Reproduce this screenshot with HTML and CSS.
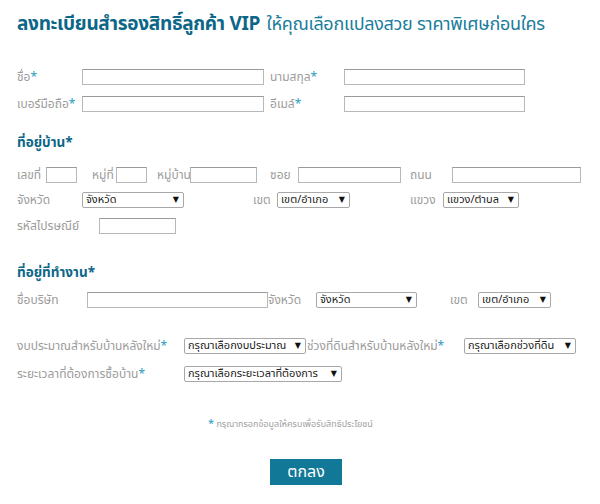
FILE: index.html
```html
<!DOCTYPE html>
<html lang="th">
<head>
<meta charset="utf-8">
<title>ลงทะเบียน VIP</title>
<link rel="stylesheet" href="styles.css">
</head>
<body>
<div class="page">
  <h1 class="title"><b>ลงทะเบียนสำรองสิทธิ์ลูกค้า VIP</b> ให้คุณเลือกแปลงสวย ราคาพิเศษก่อนใคร</h1>

  <div class="row r1">
    <span class="lbl w65">ชื่อ<i>*</i></span>
    <input class="inp w182" type="text">
    <span class="lbl w74 ml6">นามสกุล<i>*</i></span>
    <input class="inp w181" type="text">
  </div>
  <div class="row r2">
    <span class="lbl w65">เบอร์มือถือ<i>*</i></span>
    <input class="inp w182" type="text">
    <span class="lbl w74 ml6">อีเมล์<i>*</i></span>
    <input class="inp w181" type="text">
  </div>

  <h2 class="sec s1">ที่อยู่บ้าน*</h2>
  <div class="row r3">
    <span class="lbl w29">เลขที่</span>
    <input class="inp w31" type="text">
    <span class="lbl w24 ml15">หมู่ที่</span>
    <input class="inp w31" type="text">
    <span class="lbl w33 ml10">หมู่บ้าน</span>
    <input class="inp w67" type="text">
    <span class="lbl w28 ml13">ซอย</span>
    <input class="inp w103" type="text">
    <span class="lbl w42 ml9">ถนน</span>
    <input class="inp w129" type="text">
  </div>
  <div class="row r4">
    <span class="lbl w65">จังหวัด</span>
    <span class="sel w102"><select><option>จังหวัด</option></select></span>
    <span class="lbl w24 ml69">เขต</span>
    <span class="sel w73"><select><option>เขต/อำเภอ</option></select></span>
    <span class="lbl w33 ml60">แขวง</span>
    <span class="sel w76"><select><option>แขวง/ตำบล</option></select></span>
  </div>
  <div class="row r5">
    <span class="lbl w82">รหัสไปรษณีย์</span>
    <input class="inp w77" type="text">
  </div>

  <h2 class="sec s2">ที่อยู่ที่ทำงาน*</h2>
  <div class="row r6">
    <span class="lbl w70">ชื่อบริษัท</span>
    <input class="inp w181" type="text">
    <span class="lbl w48">จังหวัด</span>
    <span class="sel w101"><select><option>จังหวัด</option></select></span>
    <span class="lbl w28 ml33">เขต</span>
    <span class="sel w73"><select><option>เขต/อำเภอ</option></select></span>
  </div>

  <div class="row r7">
    <span class="lbl w167">งบประมาณสำหรับบ้านหลังใหม่<i>*</i></span>
    <span class="sel w122"><select><option>กรุณาเลือกงบประมาณ</option></select></span>
    <span class="lbl w157 ml1">ช่วงที่ดินสำหรับบ้านหลังใหม่<i>*</i></span>
    <span class="sel w112"><select><option>กรุณาเลือกช่วงที่ดิน</option></select></span>
  </div>
  <div class="row r8">
    <span class="lbl w167">ระยะเวลาที่ต้องการซื้อบ้าน<i>*</i></span>
    <span class="sel w158"><select><option>กรุณาเลือกระยะเวลาที่ต้องการ</option></select></span>
  </div>

  <p class="note"><i>*</i> กรุณากรอกข้อมูลให้ครบเพื่อรับสิทธิประโยชน์</p>
  <div class="actions"><button class="btn" type="submit">ตกลง</button></div>
</div>
</body>
</html>
```
FILE: styles.css
```css
html, body { margin: 0; padding: 0; background: #fff; }
body { font-family: "Noto Sans Thai", "Noto Sans", "DejaVu Sans", sans-serif; }
.page { width: 600px; padding-left: 17px; box-sizing: border-box; }

.title {
  margin: 0; padding-top: 14px; height: 22px; line-height: 22px;
  font-size: 18px; font-weight: normal; color: #1a7d9c; white-space: nowrap;
  letter-spacing: -0.3px;
}
.title b { color: #0c6688; font-weight: bold; font-size: 19px; margin-right: 2px; }

.row { display: flex; align-items: center; height: 16px; white-space: nowrap; }
.r1 { margin-top: 33px; }
.r2 { margin-top: 11px; }
.r3 { margin-top: 14px; }
.r4 { margin-top: 9px; }
.r5 { margin-top: 10px; }
.r6 { margin-top: 9px; }
.r7 { margin-top: 30px; }
.r8 { margin-top: 12px; }

.lbl { font-size: 12px; color: #9c9c9c; line-height: 16px; flex: none; overflow: visible; }
.lbl i, .note i { font-style: normal; color: #2a9cbd; }

.sec { margin: 0; height: 20px; line-height: 20px; font-size: 13.5px; font-weight: bold; color: #0c6688; }
.s1 { margin-top: 21px; }
.s2 { margin-top: 29px; }

.inp {
  flex: none; height: 16px; box-sizing: border-box; margin: 0; padding: 0 3px;
  border: 1px solid #b8b8b8; border-top-color: #9a9a9a; background: #fff; font-size: 11px;
}
.sel { flex: none; position: relative; height: 16px; display: block; }
.sel select {
  -webkit-appearance: none; appearance: none; display: block;
  width: 100%; height: 16px; box-sizing: border-box; margin: 0;
  padding: 0 14px 0 3px; border: 1px solid #a8a8a8; border-radius: 2px;
  background: #fff; color: #222; font-size: 11px; line-height: 14px;
  font-family: "Noto Sans Thai", "DejaVu Sans", sans-serif;
}
.sel::after {
  content: "▼"; position: absolute; right: 5px; top: 2px;
  font-size: 8px; line-height: 12px; color: #111; pointer-events: none;
}

.w24 { width: 24px; } .w28 { width: 28px; } .w29 { width: 29px; } .w31 { width: 31px; }
.w33 { width: 33px; } .w42 { width: 42px; } .w48 { width: 48px; } .w65 { width: 65px; }
.w67 { width: 67px; } .w70 { width: 70px; } .w73 { width: 73px; } .w74 { width: 74px; }
.w76 { width: 76px; } .w77 { width: 77px; } .w82 { width: 82px; } .w101 { width: 101px; }
.w102 { width: 102px; } .w103 { width: 103px; } .w112 { width: 112px; } .w122 { width: 122px; }
.w129 { width: 129px; } .w157 { width: 157px; } .w158 { width: 158px; } .w167 { width: 167px; }
.w181 { width: 181px; } .w182 { width: 182px; }
.ml1 { margin-left: 1px; } .ml6 { margin-left: 6px; } .ml9 { margin-left: 9px; }
.ml10 { margin-left: 10px; } .ml13 { margin-left: 13px; } .ml15 { margin-left: 15px; }
.ml33 { margin-left: 33px; } .ml60 { margin-left: 60px; } .ml69 { margin-left: 69px; }

.note {
  margin: 35px 0 0 191px; height: 14px; line-height: 14px;
  font-size: 9px; color: #a0a0a0;
}
.note i { font-size: 11px; }
.actions { margin-top: 28px; padding-left: 253px; }
.btn {
  display: block; width: 72px; height: 26px; margin: 0; padding: 0; border: 0;
  background: #127898; color: #fff; font-size: 16px; line-height: 26px;
  font-family: "Noto Sans Thai", "Noto Sans", sans-serif; cursor: pointer;
}
```
